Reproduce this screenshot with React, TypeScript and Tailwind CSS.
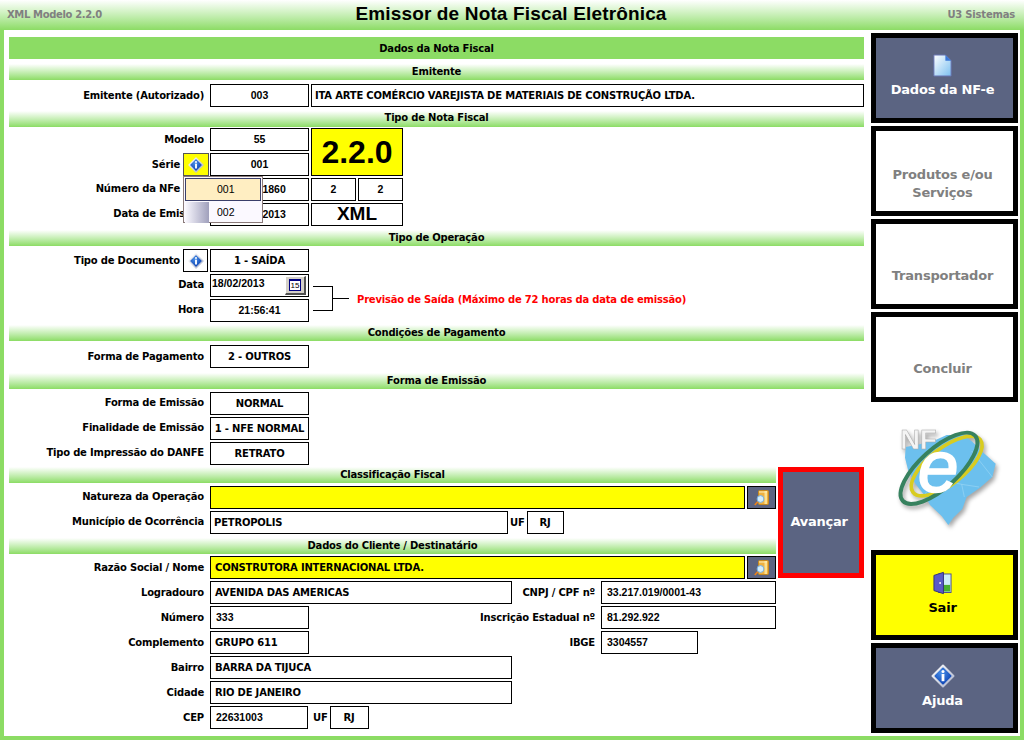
import { ReactNode } from "react";

const font = "font-['DejaVu_Sans','Liberation_Sans',sans-serif]";
const arial = "font-['Liberation_Sans',Arial,sans-serif]";

function SectionBar({ title, main, className = "pb-[2px]" }: { title: string; main?: boolean; className?: string }) {
  return (
    <div
      className={
        main
          ? "h-[22px] bg-[#8cdc64] flex items-center justify-center text-[10px] font-bold text-black"
          : `h-4 bg-gradient-to-b from-white to-[#8cdc64] flex items-center justify-center text-[10px] font-bold text-black ${className}`
      }
    >
      {title}
    </div>
  );
}

function Box({
  children,
  className = "",
  left,
  num,
}: {
  children?: ReactNode;
  className?: string;
  left?: boolean;
  num?: boolean;
}) {
  return (
    <div
      className={`h-[23px] shrink-0 border border-black flex items-center font-bold text-black whitespace-nowrap overflow-hidden ${
        num ? `${arial} text-[10.5px] tracking-normal` : "text-[10px]"
      } ${left ? (num ? "pl-[5px]" : "pl-1") : "justify-center"} ${className}`}
    >
      {children}
    </div>
  );
}

function Label({ children, className = "w-[195px]" }: { children: ReactNode; className?: string }) {
  return (
    <div className={`${className} shrink-0 text-right text-[10px] font-bold text-black whitespace-nowrap`}>
      {children}
    </div>
  );
}

function Row({
  label,
  children,
  className = "",
  up,
}: {
  label: ReactNode;
  children: ReactNode;
  className?: string;
  up?: boolean;
}) {
  return (
    <div className={`flex items-center h-[23px] ${className}`}>
      <Label className={up ? "w-[195px] pb-[2px]" : "w-[195px]"}>{label}</Label>
      <div className="ml-1.5 flex items-center">{children}</div>
    </div>
  );
}

function InfoIcon({ size = 16 }: { size?: number }) {
  return (
    <svg width={size} height={size} viewBox="0 0 24 24">
      <defs>
        <linearGradient id="infoRim" x1="0" y1="0" x2="1" y2="1">
          <stop offset="0" stopColor="#ffffff" />
          <stop offset="1" stopColor="#a8b0c8" />
        </linearGradient>
        <radialGradient id="infoBlue" cx="0.4" cy="0.3" r="0.8">
          <stop offset="0" stopColor="#4a90e8" />
          <stop offset="1" stopColor="#0a3fb0" />
        </radialGradient>
      </defs>
      <path d="M12 1.5 L22.5 12 L12 22.5 L1.5 12 Z" fill="url(#infoRim)" stroke="url(#infoRim)" strokeWidth="2" strokeLinejoin="round" />
      <path d="M12 4.5 L19.5 12 L12 19.5 L4.5 12 Z" fill="url(#infoBlue)" stroke="url(#infoBlue)" strokeWidth="2" strokeLinejoin="round" />
      <circle cx="12" cy="7.6" r="1.5" fill="#fff" />
      <rect x="10.6" y="10" width="2.8" height="7.2" fill="#fff" />
    </svg>
  );
}

function SearchButton() {
  return (
    <div className="ml-[2px] w-[29px] h-[23px] bg-[#5b6482] border border-black flex items-center justify-center">
      <svg width="15" height="16" viewBox="0 0 15 16">
        <rect x="4.5" y="0.5" width="10" height="14" rx="1" fill="#eeb040" stroke="#c88a20" />
        <rect x="10.5" y="1" width="2.5" height="13" fill="#fbe090" />
        <path d="M5 2 H13" stroke="#fff0b8" />
        <path d="M4 11.5 L0.8 15" stroke="#e8801c" strokeWidth="1.8" />
        <circle cx="6.5" cy="9" r="3.4" fill="#d4eefc" stroke="#78b0dc" />
      </svg>
    </div>
  );
}

function SideButton({
  children,
  tone,
  className = "",
}: {
  children: ReactNode;
  tone: "blue" | "white" | "yellow";
  className?: string;
}) {
  const toneClass =
    tone === "blue"
      ? "bg-[#5b6482] text-white"
      : tone === "yellow"
      ? "bg-[#ffff00] text-black"
      : "bg-white text-[#808080]";
  return (
    <div
      className={`h-[90px] w-[147px] shrink-0 border-[5px] border-black pr-1 flex flex-col items-center justify-center text-center text-[13px] leading-[18px] font-bold tracking-[-0.2px] ${toneClass} ${className}`}
    >
      {children}
    </div>
  );
}

function NfeLogo() {
  return (
    <svg width="115" height="110" viewBox="0 0 345 330" className="mr-[4px] drop-shadow-[2px_3px_2px_rgba(0,0,0,0.35)]">
      <path
        d="M62 78 L105 70 L125 62 L150 58 L185 42 L235 42 L262 62 L292 92 L332 128 L322 168 L285 200 L245 228 L232 264 L205 290 L190 312 L170 285 L135 252 L118 222 L92 190 L70 150 L60 110 Z"
        fill="#6cc0ee"
      />
      <path d="M185 180 L230 190 L282 198 M230 190 L238 228 M260 90 L292 130 L322 168 M135 200 L118 222" fill="none" stroke="#a8dcf6" strokeWidth="1.5" />
      <text x="46" y="84" fontSize="82" fontWeight="bold" fontFamily="'Liberation Sans',sans-serif" fill="#f4f4f4" stroke="#a8a8a8" strokeWidth="1.5">
        NF
      </text>
      <ellipse cx="185" cy="135" rx="128" ry="54" transform="rotate(-38 185 135)" fill="none" stroke="#d8cc20" strokeWidth="11" />
      <ellipse cx="162" cy="142" rx="146" ry="58" transform="rotate(-42 162 142)" fill="none" stroke="#37825f" strokeWidth="12" />
      <text x="98" y="214" fontSize="220" fontStyle="italic" fontFamily="'Liberation Sans',sans-serif" fill="#ffffff" stroke="#ffffff" strokeWidth="5">
        e
      </text>
    </svg>
  );
}

export default function App() {
  return (
    <div className={`${font} tracking-[-0.2px] w-[1024px] h-[740px] bg-[#8cdc64] flex flex-col overflow-hidden`}>
      {/* topo */}
      <div className="h-[30px] shrink-0 bg-gradient-to-b from-white to-[#8cdc64] grid grid-cols-[1fr_auto_1fr] items-center pl-[7px] pr-[9px] pb-[1px]">
        <span className="text-[10px] font-bold text-[#808080] tracking-[-0.35px]">XML Modelo 2.2.0</span>
        <span className={`${arial} text-[19px] tracking-[0.15px] font-bold text-black`}>Emissor de Nota Fiscal Eletrônica</span>
        <span className="text-[10px] font-bold text-[#808080] text-right">U3 Sistemas</span>
      </div>

      <div className="mx-1 mb-1 flex-1 bg-white flex pt-[3px] pl-[5px]">
        {/* coluna principal */}
        <div className="w-[855px] shrink-0 flex flex-col pt-1">
          <SectionBar title="Dados da Nota Fiscal" main />
          <div className="mt-[5px]"><SectionBar title="Emitente" /></div>
          <Row label="Emitente (Autorizado)" className="mt-1">
            <Box num className="w-[99px]">003</Box>
            <Box left className="w-[553px] ml-[2px] !pl-[3px]">ITA ARTE COMÉRCIO VAREJISTA DE MATERIAIS DE CONSTRUÇÃO LTDA.</Box>
          </Row>
          <div className="mt-1"><SectionBar title="Tipo de Nota Fiscal" className="pb-[4px]" /></div>

          <div className="flex mt-[1px] relative">
            <div className="flex flex-col gap-[2px]">
              <Row label="Modelo"><Box num className="w-[99px]">55</Box></Row>
              <div className="flex items-center h-[23px]">
                <Label className="w-[171px]">Série</Label>
                <div className="ml-[3px] w-[26px] h-[23px] bg-[#ffff00] border border-[#555] flex items-center justify-center">
                  <InfoIcon />
                </div>
                <Box num className="w-[99px] ml-[1px]">001</Box>
              </div>
              <Row up label={<span className="pr-[24px]">Número da NFe</span>}><Box num className="w-[99px]">000001860</Box></Row>
              <Row up label="Data de Emissão"><Box num className="w-[99px]">18/02/2013</Box></Row>
            </div>
            <div className="ml-[2px] flex flex-col gap-[2px] w-[92px]">
              <div className={`${arial} tracking-normal h-12 bg-[#ffff00] border border-black flex items-center justify-center text-[32px] font-bold text-black`}>2.2.0</div>
              <div className="flex justify-between">
                <Box num className="w-[45px]">2</Box>
                <Box num className="w-[45px]">2</Box>
              </div>
              <Box className={`${arial} w-[92px] !text-[19px] tracking-normal`}>XML</Box>
            </div>

            {/* menu da série */}
            <div className={`${arial} tracking-normal absolute left-[174px] top-[48px] w-[80px] h-[47px] bg-[#fbf9ff] border border-[#8a7a7a] text-[10.5px] text-black`}>
              <div className="h-[23px] m-px bg-[#ffeec2] border border-[#3a3f6a] flex items-center pl-[31px]">001</div>
              <div className="flex h-[21px]">
                <div className="w-6 ml-px bg-gradient-to-r from-[#fbf9ff] to-[#a0a0bc]" />
                <div className="pl-2 leading-[20px]">002</div>
              </div>
            </div>
          </div>

          <div className="mt-[4px]"><SectionBar title="Tipo de Operação" /></div>
          <div className="flex flex-col gap-[2px] mt-[3px] relative">
            <div className="flex items-center h-[23px]">
              <Label className="w-[171px]">Tipo de Documento</Label>
              <div className="ml-[3px] w-[25px] h-[23px] border border-black flex items-center justify-center">
                <InfoIcon />
              </div>
              <Box className="w-[99px] ml-[2px]">1 - SAÍDA</Box>
            </div>
            <Row up label="Data">
              <div className={`${arial} tracking-normal w-[99px] h-[23px] border border-black flex items-center justify-between pl-px pr-[2px] text-[10.5px] font-bold`}>
                <span className="pb-[3px]">18/02/2013</span>
                <div className="w-[21px] h-[19px] bg-[#d4d0c8] border-t border-l border-t-white border-l-white border-b-2 border-r-2 border-b-[#505050] border-r-[#505050] flex items-center justify-center">
                  <div className="w-[12px] h-[12px] bg-white border border-[#000080] border-t-2 text-[8px] leading-[9px] text-center font-normal text-black">15</div>
                </div>
              </div>
            </Row>
            <Row up label="Hora"><Box num className="w-[99px]">21:56:41</Box></Row>

            {/* colchete */}
            <div className="absolute left-[304px] top-[37px] w-[20px] h-[25px] border border-l-0 border-black" />
            <div className="absolute left-[324px] top-[49px] w-[16px] h-px bg-black" />
            <div className="absolute left-[348px] top-[43px] text-[10px] leading-[15px] font-bold text-[#ff0000] whitespace-nowrap">
              Previsão de Saída (Máximo de 72 horas da data de emissão)
            </div>
          </div>

          <div className="mt-[3px]"><SectionBar title="Condições de Pagamento" /></div>
          <Row label="Forma de Pagamento" className="mt-1"><Box className="w-[99px]">2 - OUTROS</Box></Row>
          <div className="mt-[5px]"><SectionBar title="Forma de Emissão" /></div>
          <div className="flex flex-col gap-[2px] mt-[3px]">
            <Row up label="Forma de Emissão"><Box className="w-[99px]">NORMAL</Box></Row>
            <Row up label="Finalidade de Emissão"><Box className="w-[99px]">1 - NFE NORMAL</Box></Row>
            <Row up label="Tipo de Impressão do DANFE"><Box className="w-[99px]">RETRATO</Box></Row>
          </div>

          <div className="flex mt-[2px]">
            <div className="w-[767px] shrink-0 flex flex-col">
              <SectionBar title="Classificação Fiscal" />
              <Row up label="Natureza da Operação" className="mt-[3px]">
                <Box className="w-[535px] bg-[#ffff00]" />
                <SearchButton />
              </Row>
              <Row up label="Município de Ocorrência" className="mt-[2px]">
                <Box left className="w-[298px] !pl-[3px]">PETROPOLIS</Box>
                <span className="ml-[2px] text-[10px] font-bold">UF</span>
                <Box className="w-[37px] ml-[2px]">RJ</Box>
              </Row>
              <div className="mt-1"><SectionBar title="Dados do Cliente / Destinatário" /></div>
              <Row label="Razão Social / Nome" className="mt-[2px]">
                <Box left className="w-[535px] bg-[#ffff00]">CONSTRUTORA INTERNACIONAL LTDA.</Box>
                <SearchButton />
              </Row>
              <div className="flex flex-col gap-[2px] mt-[2px]">
                <Row label="Logradouro">
                  <Box left className="w-[302px]">AVENIDA DAS AMERICAS</Box>
                  <div className="w-[89px] text-right text-[10px] font-bold pr-[6px]">CNPJ / CPF nº</div>
                  <Box num left className="w-[175px]">33.217.019/0001-43</Box>
                </Row>
                <Row label="Número">
                  <Box num left className="w-[99px]">333</Box>
                  <div className="w-[292px] text-right text-[10px] font-bold pr-[6px]">Inscrição Estadual nº</div>
                  <Box num left className="w-[175px]">81.292.922</Box>
                </Row>
                <Row label="Complemento">
                  <Box left className="w-[99px]">GRUPO 611</Box>
                  <div className="w-[292px] text-right text-[10px] font-bold pr-[6px]">IBGE</div>
                  <Box num left className="w-[97px]">3304557</Box>
                </Row>
                <Row label="Bairro"><Box left className="w-[302px]">BARRA DA TIJUCA</Box></Row>
                <Row label="Cidade"><Box left className="w-[302px]">RIO DE JANEIRO</Box></Row>
                <Row label="CEP">
                  <Box num left className="w-[98px]">22631003</Box>
                  <span className="ml-[5px] text-[10px] font-bold">UF</span>
                  <Box className="w-[39px] ml-[2px]">RJ</Box>
                </Row>
              </div>
            </div>
            <div className="ml-[2px] w-[86px] h-[111px] border-[5px] border-[#ff0000] bg-[#5b6482] pr-1 pb-0.5 flex items-center justify-center text-[13px] font-bold tracking-[-0.25px] text-white">
              Avançar
            </div>
          </div>
        </div>

        {/* coluna lateral */}
        <div className="ml-[7px] w-[147px] flex flex-col">
          <SideButton tone="blue" className="pb-[3px]">
            <svg width="19" height="23" viewBox="0 0 20 24" className="mb-1">
              <defs>
                <linearGradient id="docFill" x1="0" y1="0" x2="1" y2="1">
                  <stop offset="0" stopColor="#ffffff" />
                  <stop offset="1" stopColor="#7cc0f0" />
                </linearGradient>
              </defs>
              <path d="M1 1 H13 L19 7 V23 H1 Z" fill="url(#docFill)" stroke="#6a78b8" />
              <path d="M13 1 L19 7 H13 Z" fill="#3a78d8" />
            </svg>
            <span>Dados da NF-e</span>
          </SideButton>
          <SideButton tone="white" className="mt-[3px] pt-[26px]">Produtos e/ou<br />Serviços</SideButton>
          <SideButton tone="white" className="mt-[3px] pt-6">Transportador</SideButton>
          <SideButton tone="white" className="mt-[3px] pt-6">Concluir</SideButton>
          <div className="h-[148px] flex items-center justify-center">
            <NfeLogo />
          </div>
          <SideButton tone="yellow" className="pb-[3px]">
            <svg width="19" height="24" viewBox="0 0 20 24" className="mb-1">
              <rect x="6" y="2.5" width="13" height="19.5" fill="#cdeef8" stroke="#4a4a90" />
              <rect x="7" y="14" width="11" height="7" fill="#48b030" />
              <path d="M1 4 L11 0.8 V23.2 L1 20 Z" fill="#5a5ac8" stroke="#30307a" />
              <circle cx="7.5" cy="12" r="1" fill="#fff" />
            </svg>
            <span>Sair</span>
          </SideButton>
          <SideButton tone="blue" className="mt-[3px] pb-[3px]">
            <div className="mb-1"><InfoIcon size={24} /></div>
            <span>Ajuda</span>
          </SideButton>
        </div>
      </div>
    </div>
  );
}
